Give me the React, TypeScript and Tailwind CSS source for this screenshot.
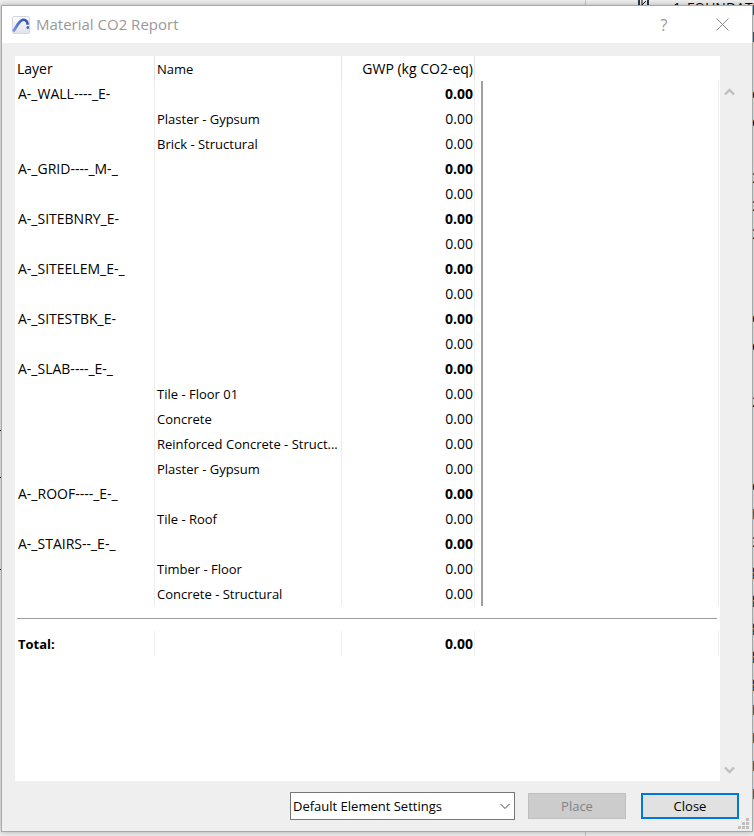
import React from "react";

type Row = { layer?: string; name?: string; total?: boolean };

const rows: Row[] = [
  { layer: "A-_WALL----_E-", total: true },
  { name: "Plaster - Gypsum" },
  { name: "Brick - Structural" },
  { layer: "A-_GRID----_M-_", total: true },
  {},
  { layer: "A-_SITEBNRY_E-", total: true },
  {},
  { layer: "A-_SITEELEM_E-_", total: true },
  {},
  { layer: "A-_SITESTBK_E-", total: true },
  {},
  { layer: "A-_SLAB----_E-_", total: true },
  { name: "Tile - Floor 01" },
  { name: "Concrete" },
  { name: "Reinforced Concrete - Struct..." },
  { name: "Plaster - Gypsum" },
  { layer: "A-_ROOF----_E-_", total: true },
  { name: "Tile - Roof" },
  { layer: "A-_STAIRS--_E-_", total: true },
  { name: "Timber - Floor" },
  { name: "Concrete - Structural" },
];

// Entries of the layer list in the window behind, by distance from the top.
const behind: [number, string][] = [
  [84, "e"], [112, "e"], [168, "3"], [196, "3"], [224, "3"], [308, "e"], [336, "e"],
  [392, "2"], [476, "e"], [504, "I"], [532, "3"], [560, "g"], [588, "g"],
  [616, "g"], [644, "g"], [672, "g"], [700, "E"], [728, "E"], [756, "E"], [784, "E"],
];

function Backdrop() {
  return (
    <div aria-hidden="true" className="absolute inset-0 overflow-hidden bg-[#f0f0f0]">
      <div className="absolute inset-y-0 left-[585px] w-px bg-[#c8c8c8]" />
      <svg className="absolute top-0 left-[638px]" width="24" height="6">
        <path d="M1 0V6M10 0V6" stroke="#26384a" strokeWidth="2" />
        <path d="M4 0V5L8 1" fill="none" stroke="#111" />
        <path d="M12 5.5h10" stroke="#777" />
      </svg>
      <div className="absolute -top-0.5 left-[673px] flex gap-1.5 leading-5">
        <span>1</span>
        <span>FOUNDATION</span>
      </div>
      <div className="absolute top-[5px] right-0 h-2.5 w-px bg-[#1c5f92]" />
      <div className="absolute top-8 right-0 h-2.5 w-px bg-[#1c5f92]" />
      {behind.map(([top, text]) => (
        <span key={top} className="absolute left-[752px] leading-5" style={{ top }}>
          {text}
        </span>
      ))}
      {[430, 477, 569].map((top) => (
        <div key={top} className="absolute left-0 h-px w-0.5 bg-black" style={{ top }} />
      ))}
    </div>
  );
}

function AppIcon() {
  return (
    <svg width="18" height="18" viewBox="0 0 18 18" className="shrink-0">
      <defs>
        <linearGradient id="tile" x1="0" y1="0" x2="0" y2="1">
          <stop offset="0" stopColor="#fdfdfe" />
          <stop offset="1" stopColor="#dfe3ee" />
        </linearGradient>
        <linearGradient id="arc" x1="0" y1="1" x2="1" y2="0">
          <stop offset="0" stopColor="#7896e6" />
          <stop offset="1" stopColor="#314fae" />
        </linearGradient>
      </defs>
      <rect x=".5" y=".5" width="17" height="17" rx="1.5" fill="url(#tile)" stroke="#d3d7df" />
      <path d="M1.2 15.5C4.5 11.5 6.5 4.4 11 3.8C13.5 3.5 15.3 5.4 15.8 8.8" fill="none" stroke="url(#arc)" strokeWidth="2.7" />
      <circle cx="15.8" cy="11.6" r="1.3" fill="#3452ae" />
    </svg>
  );
}

function Chevron({ down = false }: { down?: boolean }) {
  return (
    <svg width="11" height="8" viewBox="0 0 11 8" className={down ? "rotate-180" : ""}>
      <path d="M1 6.5L5.5 2L10 6.5" fill="none" stroke="#bfbfbf" strokeWidth="2.4" />
    </svg>
  );
}

export default function App() {
  return (
    <div className="relative flex min-h-screen flex-col overflow-hidden px-px pt-[5px] pb-1 font-['Open_Sans','Noto_Sans',sans-serif] text-sm text-black">
      <Backdrop />
      <main className="relative flex flex-1 flex-col border border-[#a7a9a9] bg-[#efefef] shadow-[0_0_6px_rgba(0,0,0,0.3)]">
        <header className="flex h-[37px] items-center bg-white pr-[22px] pl-2.5 text-[#999]">
          <AppIcon />
          <h1 className="ml-1.5 flex-1 text-[15px]">Material CO2 Report</h1>
          <button aria-label="Help" className="mr-[42px] w-4 text-base">?</button>
          <button aria-label="Close window" className="flex w-4 justify-center">
            <svg width="13" height="13" viewBox="0 0 13 13" className="shrink-0">
              <path d="M.5 .5L12.5 12.5M12.5 .5L.5 12.5" stroke="#888" />
            </svg>
          </button>
        </header>

        <div className="flex flex-1 pt-[13px] pr-[13px] pl-[13px]">
          <div className="min-w-0 flex-1 bg-white pr-px">
            <table className="w-full table-fixed border-separate border-spacing-0 text-left leading-6">
              <colgroup>
                <col className="w-[140px]" />
                <col className="w-[187px]" />
                <col className="w-[133px]" />
                <col className="w-1.5" />
                <col />
              </colgroup>
              <thead>
                <tr className="h-[25px]">
                  <th className="border-r border-[#e4e4e4] p-0 pl-0.5 font-normal">Layer</th>
                  <th className="border-r border-[#e4e4e4] p-0 pl-0.5 font-normal text-[13px]">Name</th>
                  <th className="border-r border-[#e4e4e4] p-0 pr-px text-right font-normal whitespace-nowrap">GWP (kg CO2-eq)</th>
                  <td />
                  <td />
                </tr>
              </thead>
              <tbody>
                {rows.map((row, i) => (
                  <tr key={i} className="h-[25px]">
                    <td className="border-r border-[#ededed] p-0 pl-[3px]">{row.layer}</td>
                    <td className="truncate border-r border-[#ededed] p-0 pl-0.5 text-[13px]">{row.name}</td>
                    <td className={`border-r border-[#ededed] p-0 pr-px text-right ${row.total ? "font-bold" : ""}`}>0.00</td>
                    <td className="p-0" />
                    <td className="border-r border-l-2 border-r-[#ededed] border-l-[#a0a0a0] p-0" />
                  </tr>
                ))}
              </tbody>
              <tfoot>
                <tr className="h-[25px]">
                  <td colSpan={5} className="p-0 px-0.5">
                    <hr className="border-[#a0a0a0]" />
                  </td>
                </tr>
                <tr className="h-[25px] font-bold">
                  <th className="border-r border-[#ededed] p-0 pl-[3px] text-[13px]">Total:</th>
                  <td className="border-r border-[#ededed] p-0" />
                  <td className="border-r border-[#ededed] p-0 pr-px text-right">0.00</td>
                  <td className="p-0" />
                  <td className="border-r border-[#ededed] p-0" />
                </tr>
              </tfoot>
            </table>
          </div>
          <div className="flex w-[19px] flex-col items-center justify-between pt-8 pb-[7px]">
            <button aria-label="Scroll up"><Chevron /></button>
            <button aria-label="Scroll down"><Chevron down /></button>
          </div>
        </div>

        <footer className="relative flex h-[50px] items-center justify-end gap-[13px] pr-[13px] text-[13px]">
          <div className="relative h-7 w-[225px]">
            <select aria-label="Settings" className="h-full w-full appearance-none border border-[#777] bg-white pl-0.5">
              <option>Default Element Settings</option>
            </select>
            <svg className="pointer-events-none absolute top-[11px] right-[5px]" width="10" height="7">
              <path d="M.5 1L5 5.5L9.5 1" fill="none" stroke="#444" />
            </svg>
          </div>
          <div className="flex gap-[15px]">
            <button disabled className="h-[26px] w-[98px] border border-[#bfbfbf] bg-[#ccc] text-[#838383]">Place</button>
            <button className="h-[26px] w-[98px] border-2 border-[#0078d7] bg-[#e1e1e1]">Close</button>
          </div>
          <svg className="absolute right-[3px] bottom-[2px]" width="11" height="11" fill="#bfbfbf">
            <path d="M8 0h3v3h-3zM4 4h3v3h-3zM8 4h3v3h-3zM0 8h3v3h-3zM4 8h3v3h-3zM8 8h3v3h-3z" />
          </svg>
        </footer>
      </main>
    </div>
  );
}
